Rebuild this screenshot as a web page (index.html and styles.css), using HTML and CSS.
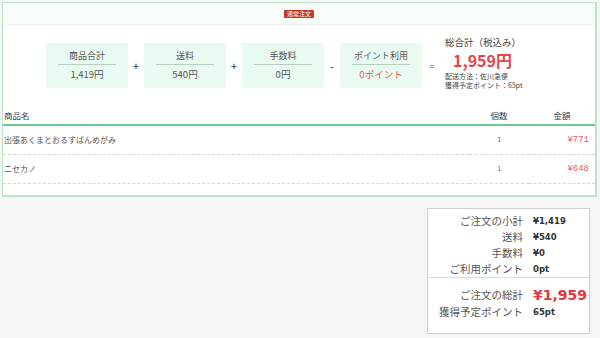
FILE: index.html
```html
<!DOCTYPE html>
<html lang="ja">
<head>
    <meta charset="UTF-8">
    <title>注文内容の確認</title>
    <link rel="stylesheet" href="styles.css">
</head>
<body>
    <div class="order-panel">
        <div class="order-top">
            <span class="badge">通常注文</span>
        </div>
        <div class="calc-row">
            <div class="calc-box">
                <div class="calc-label">商品合計</div>
                <div class="calc-value">1,419円</div>
            </div>
            <div class="op">+</div>
            <div class="calc-box">
                <div class="calc-label">送料</div>
                <div class="calc-value">540円</div>
            </div>
            <div class="op">+</div>
            <div class="calc-box">
                <div class="calc-label">手数料</div>
                <div class="calc-value">0円</div>
            </div>
            <div class="op">-</div>
            <div class="calc-box">
                <div class="calc-label">ポイント利用</div>
                <div class="calc-value point">0ポイント</div>
            </div>
            <div class="op eq">=</div>
            <div class="grand">
                <div class="grand-label">総合計（税込み）</div>
                <div class="grand-value">1,959円</div>
                <div class="grand-note">配送方法：佐川急便</div>
                <div class="grand-note">獲得予定ポイント：65pt</div>
            </div>
        </div>
        <table class="items">
            <thead>
                <tr>
                    <th class="col-name">商品名</th>
                    <th class="col-qty">個数</th>
                    <th class="col-price">金額</th>
                </tr>
            </thead>
            <tbody>
                <tr>
                    <td class="col-name">出張あくまとおるすばんめがみ</td>
                    <td class="col-qty">1</td>
                    <td class="col-price">¥771</td>
                </tr>
                <tr>
                    <td class="col-name">ニセカノ</td>
                    <td class="col-qty">1</td>
                    <td class="col-price">¥648</td>
                </tr>
            </tbody>
        </table>
    </div>

    <div class="summary-wrap">
        <div class="summary">
            <div class="summary-grid">
                <span class="s-label">ご注文の小計</span><span class="s-value">¥1,419</span>
                <span class="s-label">送料</span><span class="s-value">¥540</span>
                <span class="s-label">手数料</span><span class="s-value">¥0</span>
                <span class="s-label">ご利用ポイント</span><span class="s-value">0pt</span>
            </div>
            <div class="summary-grid total">
                <span class="s-label">ご注文の総計</span><span class="s-value big">¥1,959</span>
                <span class="s-label">獲得予定ポイント</span><span class="s-value">65pt</span>
            </div>
        </div>
    </div>
</body>
</html>
```

FILE: styles.css
```css
body {
    margin: 0;
    font-family: "Noto Sans CJK JP", "Noto Sans", sans-serif;
    background-color: #f5f5f5;
    color: #444;
}

.order-panel {
    margin: 2px 3px 0 2px;
    background: #fff;
    border: 1px solid #bfe3c8;
    border-width: 1px 2px 2px 1px;
    padding-bottom: 11px;
}

.order-top {
    height: 21px;
    background: #f8fcf9;
    border-bottom: 1px solid #eaf4ec;
    display: flex;
    justify-content: center;
    align-items: center;
}

.badge {
    background: #c4382c;
    color: #fff;
    font-size: 6px;
    line-height: 8px;
    padding: 0 3px;
    border-radius: 1px;
}

.calc-row {
    display: flex;
    align-items: center;
    padding: 15px 0 0 43px;
}

.calc-box {
    width: 82px;
    height: 45px;
    background: #e9fbf1;
    display: flex;
    flex-direction: column;
    align-items: center;
    justify-content: center;
    font-size: 9px;
    color: #555;
}

.calc-label {
    width: 58px;
    text-align: center;
    line-height: 12px;
    padding-bottom: 2px;
    border-bottom: 1px solid #b8cfc2;
}

.calc-value {
    line-height: 14px;
    padding-top: 2px;
    font-size: 9.5px;
}

.calc-value.point {
    color: #e8595e;
}

.op {
    width: 16px;
    text-align: center;
    font-size: 10px;
    font-weight: bold;
    color: #555;
}

.op.eq {
    width: 20px;
    margin-right: 3px;
    font-weight: normal;
    color: #888;
}

.grand {
    align-self: flex-start;
    margin-top: -4px;
    color: #444;
}

.grand-label {
    font-size: 9.5px;
    line-height: 12px;
}

.grand-value {
    font-size: 16px;
    font-weight: bold;
    color: #e8434a;
    line-height: 20px;
    margin: 2px 0 2px 8px;
}

.grand-note {
    font-size: 7px;
    line-height: 9px;
}

.items {
    width: 100%;
    border-collapse: collapse;
    margin-top: 16px;
    font-size: 8px;
}

.items th {
    font-weight: normal;
    font-size: 8.5px;
    line-height: 12px;
    color: #444;
    height: 18px;
    padding: 0;
    border-bottom: 2px solid #6cc88e;
    vertical-align: middle;
}

.items td {
    height: 28px;
    padding: 0;
    line-height: 12px;
    border-bottom: 1px dashed #d6d6d6;
    color: #555;
}

.col-name {
    text-align: left;
}

.items .col-name {
    padding-left: 1px;
}

.col-qty {
    width: 60px;
    text-align: center;
}

.col-price {
    width: 60px;
    text-align: center;
}

.items td.col-qty {
    font-family: "DejaVu Sans Mono", monospace;
    font-size: 7px;
    color: #777;
}

.items td.col-price {
    text-align: right;
    padding-right: 6px;
    color: #e8595e;
    font-family: "Liberation Mono", monospace;
    font-size: 9px;
}

.summary-wrap {
    display: flex;
    justify-content: flex-end;
    padding: 11px 10px 0 0;
}

.summary {
    width: 161px;
    background: #fff;
    border: 1px solid #cfcfcf;
    padding: 4px 0 13px;
}

.summary-grid {
    display: grid;
    grid-template-columns: 95px auto;
    column-gap: 10px;
    align-items: center;
}

.summary-grid.total {
    border-top: 1px solid #ddd;
    padding-top: 8px;
}

.s-label {
    text-align: right;
    font-size: 10.5px;
    line-height: 16px;
    color: #555;
}

.s-value {
    font-family: "DejaVu Sans", sans-serif;
    font-size: 8.5px;
    font-weight: bold;
    color: #333;
}

.s-value.big {
    font-size: 14px;
    color: #e8343c;
    line-height: 18px;
}
```
